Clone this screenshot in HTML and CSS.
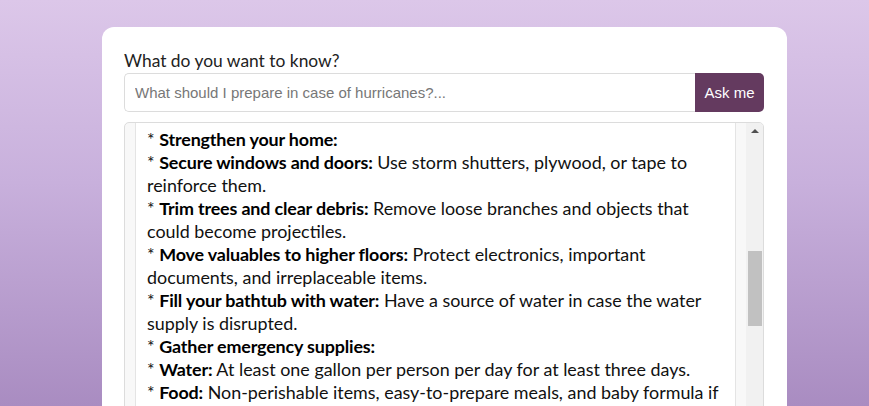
FILE: index.html
```html
<!DOCTYPE html>
<html>
<head>
<meta charset="utf-8">
<link rel="stylesheet" href="styles.css">
</head>
<body>
<main class="card">
  <label class="ask-label" for="q">What do you want to know?</label>
  <div class="ask-row">
    <input id="q" class="ask-input" type="text" placeholder="What should I prepare in case of hurricanes?...">
    <button class="ask-btn">Ask me</button>
  </div>
  <div class="response">
    <div class="gutter">
      <div class="content">
        <p>* <b>Strengthen your home:</b></p>
        <p>* <b>Secure windows and doors:</b> Use storm shutters, plywood, or tape to reinforce them.</p>
        <p>* <b>Trim trees and clear debris:</b> Remove loose branches and objects that could become projectiles.</p>
        <p>* <b>Move valuables to higher floors:</b> Protect electronics, important documents, and irreplaceable items.</p>
        <p>* <b>Fill your bathtub with water:</b> Have a source of water in case the water supply is disrupted.</p>
        <p>* <b>Gather emergency supplies:</b></p>
        <p>* <b>Water:</b> At least one gallon per person per day for at least three days.</p>
        <p>* <b>Food:</b> Non-perishable items, easy-to-prepare meals, and baby formula if needed.</p>
        <p>* <b>First aid kit:</b> Bandages, medications, and other essentials.</p>
      </div>
    </div>
    <div class="scrollbar">
      <div class="sb-arrow"></div>
      <div class="sb-thumb"></div>
    </div>
  </div>
</main>
</body>
</html>
```

FILE: styles.css
```css
html, body {
  margin: 0;
  height: 406px;
  overflow: hidden;
}
body {
  background: linear-gradient(180deg, #dcc7e9 0%, #c8b0dc 45%, #a98cc1 100%);
  padding: 27px 0 0 102px;
  box-sizing: border-box;
}
.card {
  width: 685px;
  height: 600px;
  box-sizing: border-box;
  background: #fff;
  border-radius: 12px;
  padding: 23px 23px 0 22px;
  display: flex;
  flex-direction: column;
}
.ask-label {
  font-family: "Lato", "Open Sans", sans-serif;
  font-size: 17.4px;
  line-height: 21px;
  color: #222;
  margin-bottom: 2px;
}
.ask-row {
  display: flex;
  height: 39px;
}
.ask-input {
  flex: 1;
  min-width: 0;
  box-sizing: border-box;
  border: 1px solid #dcdcdc;
  border-right: none;
  border-radius: 5px 0 0 5px;
  padding: 0 10px;
  font-family: "Liberation Sans", Arial, sans-serif;
  font-size: 15px;
  color: #333;
  outline: none;
}
.ask-input::placeholder {
  color: #777;
}
.ask-btn {
  width: 69px;
  border: none;
  border-radius: 0 5px 5px 0;
  background: #643a5f;
  color: #fff;
  font-family: "Liberation Sans", Arial, sans-serif;
  font-size: 15px;
  padding: 0;
}
.response {
  margin-top: 10px;
  height: 400px;
  display: flex;
  border: 1px solid #dcdcdc;
  border-radius: 5px;
  overflow: hidden;
  background: #f8f8f8;
}
.gutter {
  flex: 1;
  padding: 0 10px;
  display: flex;
}
.content {
  flex: 1;
  background: #fff;
  border-left: 1px solid #e4e4e4;
  border-right: 1px solid #e4e4e4;
  padding: 5px 12px 0 11px;
  font-family: "Lato", "Open Sans", sans-serif;
  font-size: 17.9px;
  line-height: 23px;
  color: #111;
}
.content p {
  margin: 0;
}
.content b {
  font-weight: 700;
  color: #000;
  letter-spacing: -0.15px;
}
.scrollbar {
  width: 17px;
  background: #f1f1f1;
  display: flex;
  flex-direction: column;
  align-items: center;
}
.sb-arrow {
  margin-top: 6px;
  width: 0;
  height: 0;
  border-left: 4px solid transparent;
  border-right: 4px solid transparent;
  border-bottom: 4px solid #505050;
}
.sb-thumb {
  margin-top: 118px;
  width: 14px;
  height: 75px;
  background: #c1c1c1;
}
```
